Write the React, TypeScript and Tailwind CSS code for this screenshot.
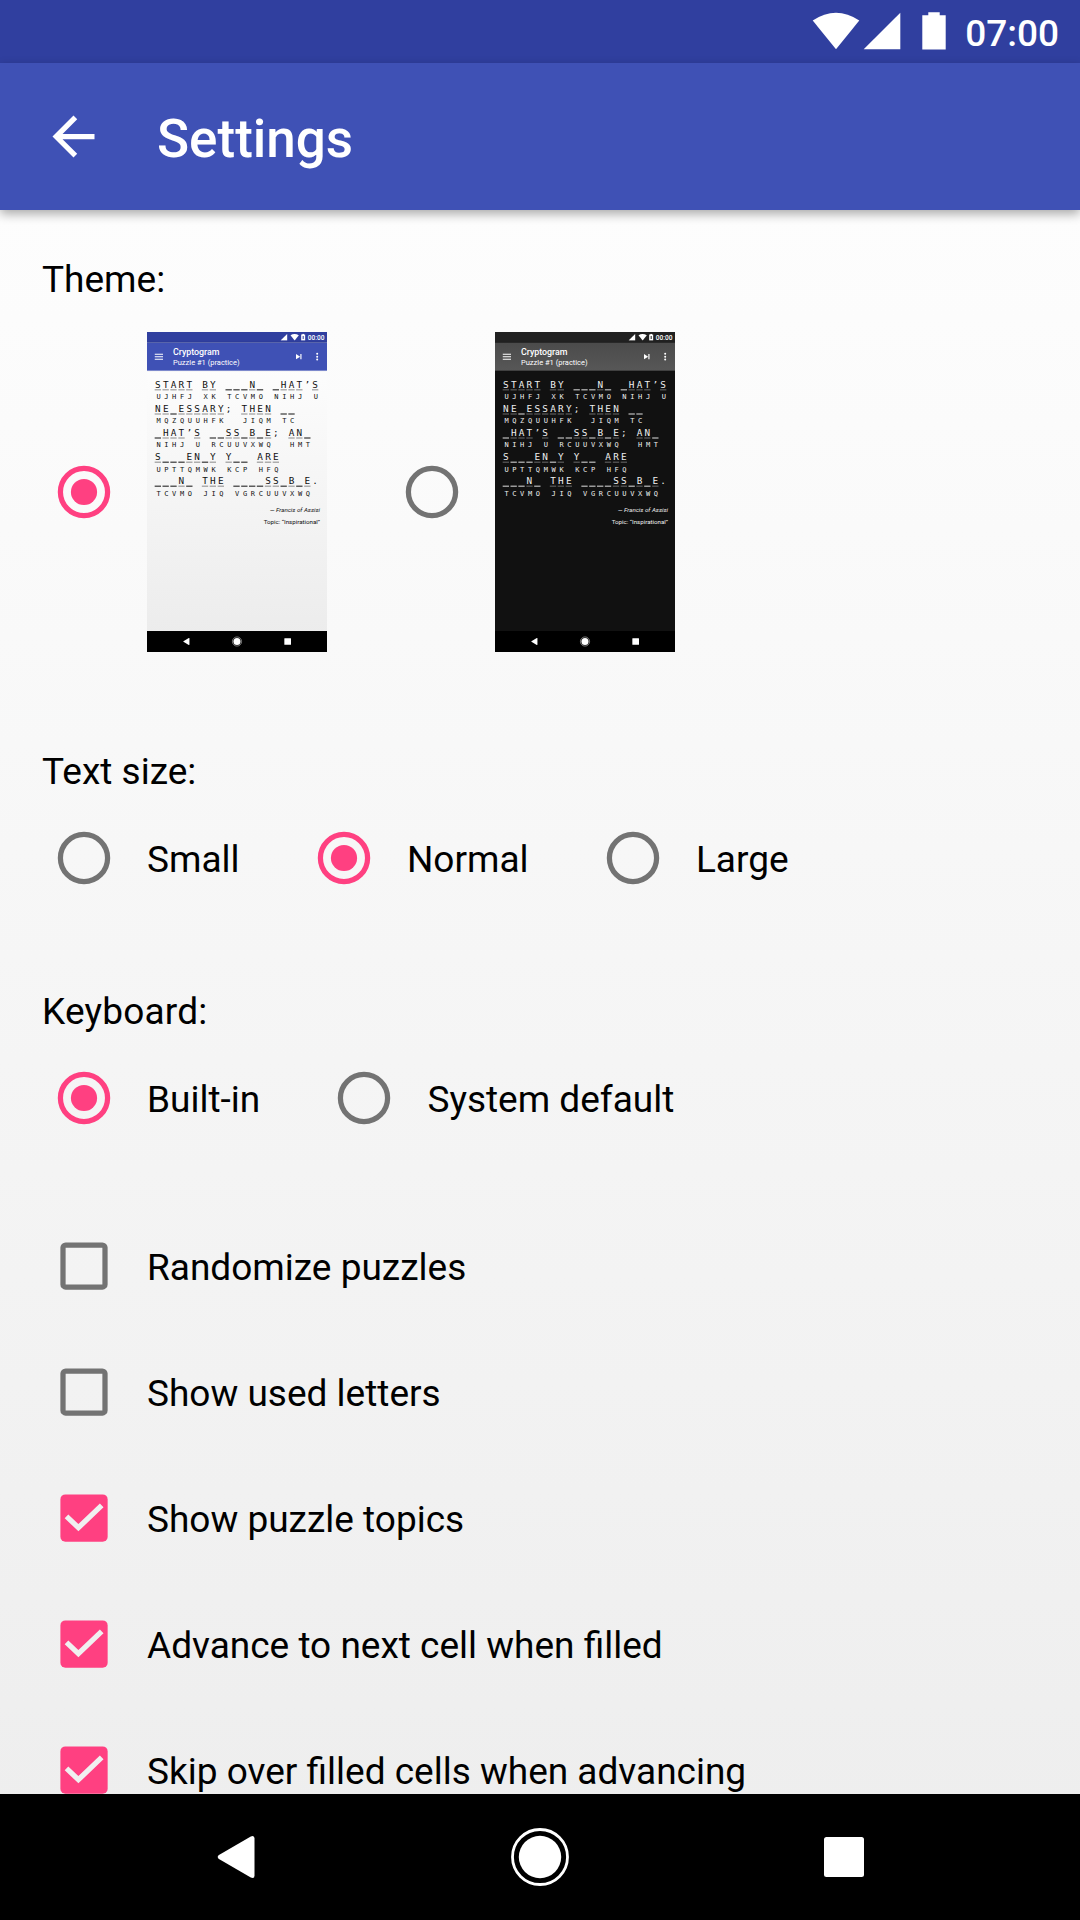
import React from "react";

type Theme = "light" | "dark";

const PUZZLE: [string, string][] = [
  ["START BY ___N_ _HAT’S", "UJHFJ XK TCVMO NIHJ U"],
  ["NE_ESSARY; THEN __", "MQZQUUHFK  JIQM TC"],
  ["_HAT’S __SS_B_E; AN_", "NIHJ U RCUUVXWQ  HMT"],
  ["S___EN_Y Y__ ARE", "UPTTQMWK KCP HFQ"],
  ["___N_ THE ____SS_B_E.", "TCVMO JIQ VGRCUUVXWQ"],
];

function NavBar() {
  return (
    <nav className="relative z-10 h-[126px] w-full shrink-0 bg-black">
      <svg viewBox="0 0 1080 126" width="1080" height="126" fill="#fff">
        <path d="M218.5 61.2 250.8 42.4Q254.500 40.800 254.500 44.500V81.500Q254.500 85.200 250.800 83.600L218.500 64.800Q216.700 63 218.500 61.200Z" />
        <circle cx="540" cy="63" r="21.200" />
        <circle cx="540" cy="63" r="27.500" fill="none" stroke="#fff" strokeWidth="2.800" />
        <rect x="824" y="43" width="40" height="40" rx="2.500" />
      </svg>
    </nav>
  );
}

function Cell({ letter, code, dark }: { letter: string; code: string; dark: boolean }) {
  const isLetter = /[A-Z]/.test(letter);
  const isBlank = letter === "_";
  const line = isBlank
    ? dark ? "bg-[#e0e0e0] h-[6px]" : "bg-[#111] h-[6px]"
    : isLetter
      ? dark ? "bg-[#6a6a6a] h-[6px]" : "bg-[#8a8a8a] h-[6px]"
      : "h-[6px]";
  return (
    <div className="w-[47.2px] h-[144.6px] flex flex-col">
      <div className="h-[60px] w-[38px] text-center text-[56px] leading-[60px]">{isBlank ? "" : letter}</div>
      <div className={"w-[38px] " + line} />
      <div className="h-[60px] w-[46px] pt-[8px] text-center text-[42px] leading-[62px]">{code}</div>
    </div>
  );
}

function Preview({ theme }: { theme: Theme }) {
  const dark = theme === "dark";
  return (
    <div className="w-[180px] h-[320px] overflow-hidden">
      <div
        className={
          "flex h-[1920px] w-[1080px] origin-top-left scale-[0.16667] flex-col " +
          (dark ? "bg-[#111] text-[#eee]" : "bg-linear-to-b from-white to-[#ebebeb] text-[#111]")
        }
      >
        <div className={"flex h-[64px] shrink-0 items-center justify-end pr-[16px] text-white " + (dark ? "bg-[#212121]" : "bg-[#303f9f]")}>
          <svg className="mr-[4px]" width="160" height="42" viewBox="0 0 160 42" fill="#fff">
            <path d="M0 40H40V1Z" />
            <path d="M60 8Q84-5 110 8L85 40Z" />
            <path fillRule="evenodd" d="M124 4h7V0h10v4h7V40h-24ZM133 13v18h6V13Z" />
          </svg>
          <span className="text-[39px] font-medium leading-[42px]">00:00</span>
        </div>
        <div
          className={
            "relative flex h-[168px] shrink-0 items-center pl-[44px] pr-[36px] text-white shadow-[0_4px_12px_rgba(0,0,0,0.4)] " +
            (dark ? "bg-linear-to-b from-[#4b4b4b] to-[#575757]" : "bg-[#3f51b5]")
          }
        >
          <svg width="54" height="54" viewBox="0 0 54 54" stroke="#fff" strokeWidth="6">
            <path d="M2 12H52M2 27H52M2 42H52" />
          </svg>
          <div className="ml-[58px] flex-1 pt-[6px]">
            <div className="text-[53px] font-medium leading-[60px]">Cryptogram</div>
            <div className="text-[45px] leading-[58px]">Puzzle #1 (practice)</div>
          </div>
          <svg width="190" height="60" viewBox="0 0 190 60" fill="#fff">
            <path d="M40 14 65 30 40 46ZM66 14h7V46h-7Z" />
            <circle cx="167" cy="13" r="6" />
            <circle cx="167" cy="30" r="6" />
            <circle cx="167" cy="47" r="6" />
          </svg>
        </div>
        <div className="flex-1 pl-[46px] pt-[52px] font-['DejaVu_Sans_Mono',monospace]">
          {PUZZLE.map(([plain, cipher], r) => (
            <div key={r} className="flex">
              {plain.split("").map((ch, i) => (
                <Cell key={i} letter={ch} code={cipher[i] ?? ""} dark={dark} />
              ))}
            </div>
          ))}
          <div className="pr-[42px] text-right font-[Roboto,sans-serif] text-[37px]">
            <div className="mt-[24px] leading-[72px] italic">— Francis of Assisi</div>
            <div className="leading-[72px]">Topic: “Inspirational”</div>
          </div>
        </div>
        <NavBar />
      </div>
    </div>
  );
}

function Radio({ checked }: { checked?: boolean }) {
  const color = checked ? "#ff4081" : "#737373";
  return (
    <svg className="mr-[21px] shrink-0" width="84" height="84" viewBox="0 0 84 84">
      <circle cx="42" cy="42" r="23.600" fill="none" stroke={color} strokeWidth="5.250" />
      {checked && <circle cx="42" cy="42" r="13.100" fill={color} />}
    </svg>
  );
}

function Checkbox({ checked }: { checked?: boolean }) {
  return (
    <svg className="mr-[21px] shrink-0" width="84" height="84" viewBox="0 0 84 84">
      {checked ? (
        <>
          <rect x="18.400" y="18.400" width="47.250" height="47.250" rx="5" fill="#ff4081" />
          <path d="M24.500 40.300 36.400 51.700 59.700 29.300" fill="none" stroke="#f0f0f0" strokeWidth="5.250" />
        </>
      ) : (
        <rect x="21" y="21" width="42" height="42" rx="2.600" fill="none" stroke="#737373" strokeWidth="5.250" />
      )}
    </svg>
  );
}

function RadioOption({ label, checked }: { label: string; checked?: boolean }) {
  return (
    <label className="flex h-[84px] items-center">
      <Radio checked={checked} />
      <span className="pt-[3px]">{label}</span>
    </label>
  );
}

const OPTIONS: [string, boolean][] = [
  ["Randomize puzzles", false],
  ["Show used letters", false],
  ["Show puzzle topics", true],
  ["Advance to next cell when filled", true],
  ["Skip over filled cells when advancing", true],
];

export default function App() {
  return (
    <div className="flex h-[1920px] w-[1080px] flex-col overflow-hidden bg-linear-to-b from-white to-[#ededed] font-[Roboto,sans-serif] text-[37px] leading-[42px] text-black">
      <div className="flex h-[63px] shrink-0 items-center justify-end bg-[#303f9f] pr-[21px] text-white">
        <svg className="mr-[18px]" width="135" height="63" viewBox="812 0 135 63" fill="#fff">
          <path d="M812.700 20.500Q836 5 859.300 20.500L836 49.300Z" />
          <path d="M863.700 49.300H900.300V12.700Z" />
          <path d="M922.300 15.200H928.300V12.200H939.700V15.200H945.700V49.600H922.300Z" />
        </svg>
        <span className="pt-[5px] font-medium">07:00</span>
      </div>
      <header className="relative z-10 flex h-[147px] shrink-0 items-center bg-[#3f51b5] pl-[42px] text-white shadow-[0_4px_10px_rgba(0,0,0,0.33)]">
        <svg width="63" height="63" viewBox="0 0 24 24" fill="#fff">
          <path d="M20 11H7.830l5.590-5.590L12 4l-8 8 8 8 1.410-1.410L7.830 13H20v-2z" />
        </svg>
        <h1 className="ml-[52px] pt-[4px] text-[53px] font-medium leading-[60px]">Settings</h1>
      </header>

      <main className="h-[1584px] shrink-0 overflow-hidden pl-[42px] pt-[49px]">
        <h2>Theme:</h2>
        <div className="mt-[31px] flex gap-[63px]">
          <label className="flex items-center">
            <Radio checked />
            <Preview theme="light" />
          </label>
          <label className="flex items-center">
            <Radio />
            <Preview theme="dark" />
          </label>
        </div>

        <h2 className="mt-[99px]">Text size:</h2>
        <div className="mt-[23px] flex gap-[62.4px]">
          <RadioOption label="Small" />
          <RadioOption label="Normal" checked />
          <RadioOption label="Large" />
        </div>

        <h2 className="mt-[91px] tracking-[0.2px]">Keyboard:</h2>
        <div className="mt-[23px] flex gap-[62.2px]">
          <RadioOption label="Built-in" checked />
          <RadioOption label="System default" />
        </div>

        <div className="mt-[63px]">
          {OPTIONS.map(([label, checked]) => (
            <label key={label} className="flex h-[126px] items-center">
              <Checkbox checked={checked} />
              <span className="pt-[3px]">{label}</span>
            </label>
          ))}
        </div>
      </main>
      <NavBar />
    </div>
  );
}
